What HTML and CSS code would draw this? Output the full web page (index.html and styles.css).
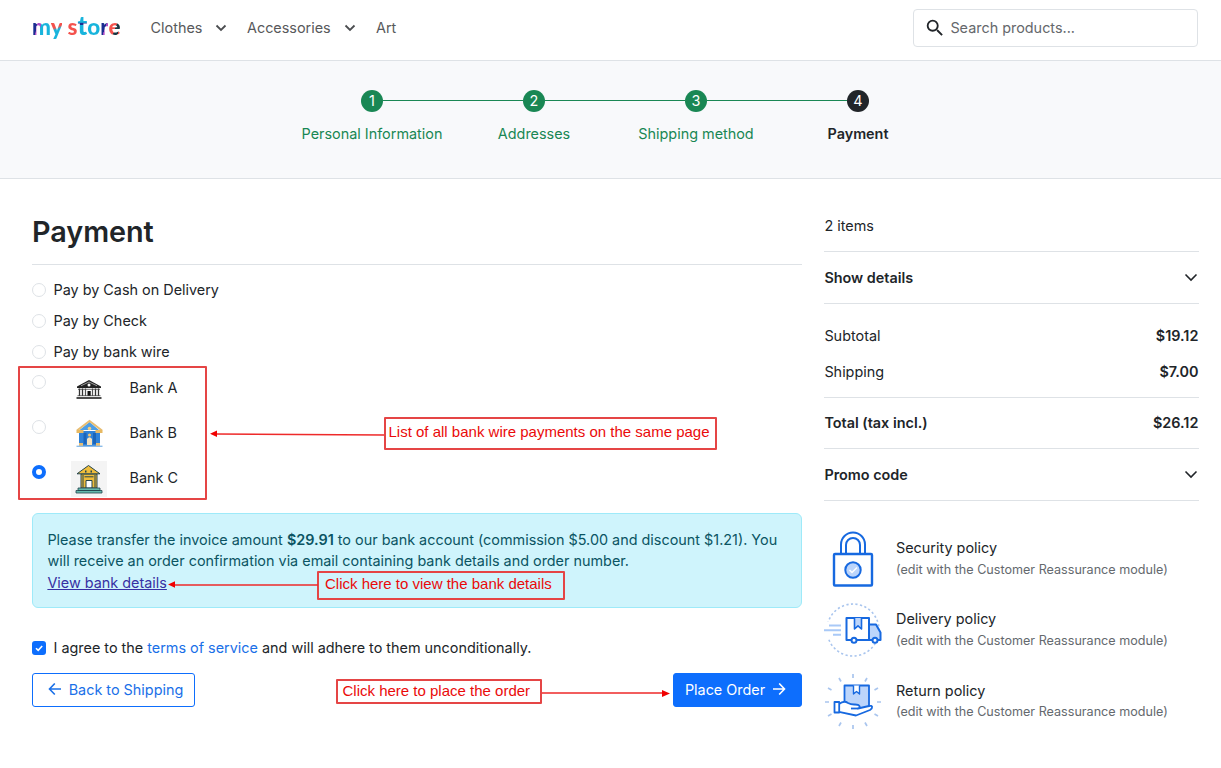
FILE: index.html
```html
<!DOCTYPE html>
<html lang="en">
<head>
    <meta charset="UTF-8">
    <meta name="viewport" content="width=device-width, initial-scale=1.0">
    <title>Checkout - Payment</title>
    <link rel="stylesheet" href="styles.css">
</head>
<body>
    <header class="header">
        <a class="logo" aria-label="my store"><span class="l-m">m</span><span class="l-y">y</span> <span class="l-s">s</span><span class="l-t">t</span><span class="l-o">o</span><span class="l-r">r</span><span class="l-e">e</span></a>
        <nav class="main-menu">
            <a class="menu-item clothes">Clothes
                <svg class="caret" viewBox="0 0 12 8"><path d="M1.5 1.5 6 6l4.500-4.500"/></svg>
            </a>
            <a class="menu-item accessories">Accessories
                <svg class="caret" viewBox="0 0 12 8"><path d="M1.5 1.500 6 6l4.500-4.500"/></svg>
            </a>
            <a class="menu-item">Art</a>
        </nav>
        <div class="search">
            <svg class="search-icon" viewBox="0 0 24 24"><path d="M15.500 14h-.79l-.28-.27A6.471 6.471 0 0 0 16 9.500 6.500 6.500 0 1 0 9.500 16c1.610 0 3.090-.59 4.230-1.570l.27.28v.79l5 4.990L20.490 19l-4.990-5zm-6 0C7.010 14 5 11.990 5 9.500S7.010 5 9.500 5 14 7.010 14 9.500 11.990 14 9.500 14z"/></svg>
            <span>Search products...</span>
        </div>
    </header>

    <section class="steps-bar">
        <ol class="steps">
            <li class="step"><span class="step-number">1</span><span class="step-label">Personal Information</span></li>
            <li class="step"><span class="step-number">2</span><span class="step-label">Addresses</span></li>
            <li class="step"><span class="step-number">3</span><span class="step-label">Shipping method</span></li>
            <li class="step current"><span class="step-number">4</span><span class="step-label">Payment</span></li>
        </ol>
    </section>

    <main class="checkout">
        <section class="payment">
            <h1>Payment</h1>

            <div class="options">
                <label class="option"><span class="radio"></span>Pay by Cash on Delivery</label>
                <label class="option"><span class="radio"></span>Pay by Check</label>
                <label class="option"><span class="radio"></span>Pay by bank wire</label>
            </div>

            <div class="banks">
                <label class="bank">
                    <span class="radio"></span>
                    <svg class="bank-logo" viewBox="0 0 36 36">
                        <path d="M6 15.500 18 9l12 6.500v1.500H6z" fill="#222"/>
                        <path d="M10 14.800 18 11l8 3.800" stroke="#bbb" stroke-width=".8" fill="none"/>
                        <circle cx="18" cy="14" r="1.500" fill="#fff"/>
                        <path d="M8.500 17.500V25M11.500 17.500V25M24.500 17.500V25M27.500 17.500V25" stroke="#333" stroke-width="1.300"/>
                        <path d="M14.500 17.500V25M21.500 17.500V25" stroke="#555" stroke-width="1.200"/>
                        <path d="M16.500 20h3.200v5h-3.200z" fill="#111"/>
                        <path d="M7 18.300h22M6.500 24.700h23" stroke="#444" stroke-width=".8"/>
                        <path d="M5.500 27h25" stroke="#111" stroke-width="1.500"/>
                    </svg>
                    <span class="bank-name">Bank A</span>
                </label>
                <label class="bank">
                    <span class="radio"></span>
                    <svg class="bank-logo" viewBox="0 0 36 36">
                        <path d="M8 15h21v15H8z" fill="#2f82d8"/>
                        <path d="M12.500 17h3v11h-3zM22 17h3v11h-3z" fill="#1d65b8"/>
                        <path d="M8.500 14 18.500 6 28 14z" fill="#4d9ee5"/>
                        <path d="M6 14.500 18.500 5 31 14.500" stroke="#e7bd72" stroke-width="2" fill="none"/>
                        <path d="M5.500 14h7v3h-7zM24.500 14h7v3h-7z" fill="#e7b962"/>
                        <circle cx="18.500" cy="12.500" r="1.800" fill="#f1cc80"/>
                        <path d="M16 23q2.500-3.500 5 0v6h-5z" fill="#f7e3bd"/>
                        <circle cx="18.500" cy="19" r="1.500" fill="#f3c46f"/>
                        <path d="M8 27h4v3H8zM25 27h4v3h-4z" fill="#e7bd72"/>
                        <path d="M5.500 30.300h26" stroke="#8bbce9" stroke-width="1.400"/>
                    </svg>
                    <span class="bank-name">Bank B</span>
                </label>
                <label class="bank">
                    <span class="radio checked"></span>
                    <svg class="bank-logo" viewBox="0 0 36 36">
                        <path d="M0 0h36v36H0z" fill="#f4f4f4"/>
                        <g stroke="#24454e" stroke-width="1" stroke-linejoin="round">
                            <path d="M10 13h16v14H10z" fill="#efbd3b"/>
                            <path d="M6 12.800 17.500 4.500 29 12.800z" fill="#efbd3b"/>
                            <path d="M12 14v12.500M24 14v12.500" fill="none"/>
                            <path d="M13.500 15.800h9" fill="none"/>
                            <path d="M15 19.500h6V27h-6z" fill="#fff"/>
                            <path d="M7 27h22v2.500H7zM5 29.500h26V32H5z" fill="#65b9ad" stroke-width=".8"/>
                        </g>
                        <path d="M14 9.500h1.500v2H14zM19.500 9.500H21v2h-1.500z" fill="#24454e"/>
                    </svg>
                    <span class="bank-name">Bank C</span>
                </label>
            </div>

            <div class="alert">
                Please transfer the invoice amount <strong>$29.91</strong> to our bank account (commission $5.00 and discount $1.21). You will receive an order confirmation via email containing bank details and order number.<br>
                <a class="details-link">View bank details</a>
            </div>

            <label class="terms">
                <span class="checkbox"><svg viewBox="0 0 14 14"><path d="m4 7.200 2.200 2.200L10.200 5"/></svg></span>
                <span>I agree to the <a>terms of service</a> and will adhere to them unconditionally.</span>
            </label>

            <div class="actions">
                <button class="btn btn-outline">
                    <svg class="arrow" viewBox="0 0 14 14"><path d="M13 6H1.500M6.800.5 1.500 6l5.300 5.500"/></svg>
                    Back to Shipping
                </button>
                <button class="btn btn-primary">
                    Place Order
                    <svg class="arrow" viewBox="0 0 14 14"><path d="M1 6h11.500M7.200.5 12.500 6l-5.300 5.500"/></svg>
                </button>
            </div>
        </section>

        <aside class="summary">
            <div class="items-count">2 items</div>
            <div class="toggle">Show details
                <svg class="chevron" viewBox="0 0 14 9"><path d="m1.500 1.500 5.500 5.500 5.500-5.500"/></svg>
            </div>
            <div class="subtotals">
                <div class="line"><span>Subtotal</span><strong>$19.12</strong></div>
                <div class="line"><span>Shipping</span><strong>$7.00</strong></div>
            </div>
            <div class="line total"><strong>Total (tax incl.)</strong><strong>$26.12</strong></div>
            <div class="toggle">Promo code
                <svg class="chevron" viewBox="0 0 14 9"><path d="m1.500 1.500 5.500 5.500 5.500-5.500"/></svg>
            </div>

            <ul class="reassurance">
                <li>
                    <svg class="policy-icon" viewBox="0 0 58 58">
                        <g fill="none" stroke="#1769e0" stroke-width="2">
                            <path d="M17 24V14.500a12 12 0 0 1 24 0V24"/>
                            <path d="M22 24V15a7 7 0 0 1 14 0v9"/>
                            <rect x="10" y="24" width="38" height="31.500" rx="1" fill="#fff" stroke-width="2.400"/>
                            <circle cx="29" cy="40" r="7.700" fill="#bcd5fb"/>
                        </g>
                        <path d="m25.500 40 2.500 2.500 5-5" fill="none" stroke="#fff" stroke-width="1.500"/>
                    </svg>
                    <div><p>Security policy</p><small>(edit with the Customer Reassurance module)</small></div>
                </li>
                <li>
                    <svg class="policy-icon" viewBox="0 0 58 58">
                        <circle cx="29" cy="29" r="26" fill="none" stroke="#a9c5ee" stroke-width="1.600" stroke-dasharray="2.200 2.400"/>
                        <path d="M0 21h17v16H0z" fill="#fff"/>
                        <path d="M5 24.500h12M0 29.200h17M9 33.700h8" stroke="#a9c9f7" stroke-width="2"/>
                        <g stroke="#1769e0" stroke-width="2" stroke-linejoin="round">
                            <path d="M22.500 17h22.500v22H22.500z" fill="#fff"/>
                            <path d="M45 23.500h7l4.500 8V39H45z" fill="#bcd5fb"/>
                            <path d="M30.500 17v11l3.500-3.200 3.500 3.200V17" fill="#bcd5fb" stroke-width="1.600"/>
                            <circle cx="30" cy="39.300" r="2.500" fill="#fff"/>
                            <circle cx="51" cy="39.300" r="2.500" fill="#fff"/>
                        </g>
                    </svg>
                    <div><p>Delivery policy</p><small>(edit with the Customer Reassurance module)</small></div>
                </li>
                <li>
                    <svg class="policy-icon" viewBox="0 0 58 58">
                        <path d="M29 1v4M29 52v4M1 29h4M53 29h4M15 5l2 3.500M43 5l-2 3.500M4 15l3.500 2M54 15l-3.500 2M4 43l3.500-2M54 43l-3.500-2M15 53l2-3.500M43 53l-2-3.500" stroke="#a9c5ee" stroke-width="1.700"/>
                        <g stroke="#1769e0" stroke-width="1.800" stroke-linejoin="round">
                            <path d="M20.500 12.500h24.500V37H20.500z" fill="#bcd5fb"/>
                            <path d="M29.500 12.500v8.500l3-2.500 3 2.500v-8.500" fill="#fff" stroke-width="1.400"/>
                            <path d="M15 31q5-4 9-1 3 1.700 7 1.500c5 0 6 3 3 4l11-2.500c4-1 4 2 1 4L32 42.500l-17-3.700z" fill="#fff"/>
                            <path d="M10.500 29h4.700v10.500h-4.700z" fill="#fff"/>
                            <path d="M34 35.500h-7" fill="none"/>
                        </g>
                    </svg>
                    <div><p>Return policy</p><small>(edit with the Customer Reassurance module)</small></div>
                </li>
            </ul>
        </aside>
    </main>

    <!-- Guide notes over the page -->
    <div class="frame"></div>
    <div class="note note-banks">List of all bank wire payments on the same page</div>
    <div class="note note-details">Click here to view the bank details</div>
    <div class="note note-order">Click here to place the order</div>
    <svg class="note-arrows" viewBox="0 0 1221 768">
        <path d="M384 435 216 434M318 585H174M542 693h121" stroke="#ee2a2a" stroke-width="1.700"/>
        <path d="m210 433.700 7-3.200v6.500zM168 584.500l7-3.200v6.500zM670 693.500l-8-3.500v7z" fill="#f00000"/>
    </svg>
</body>
</html>
```

FILE: styles.css
```css
* {
    box-sizing: border-box;
}

body {
    margin: 0;
    position: relative;
    height: 768px;
    overflow: hidden;
    font-family: Inter, "Liberation Sans", sans-serif;
    font-size: 14.4px;
    line-height: 21.6px;
    color: #212529;
    background-color: #fff;
}

h1, p, ol, ul {
    margin: 0;
    padding: 0;
    list-style: none;
}

strong {
    font-weight: 600;
}

/* Header */
.header {
    height: 61px;
    padding: 0 23px 5px 32px;
    display: flex;
    align-items: center;
    border-bottom: 1px solid #dee2e6;
}

.logo {
    width: 118.6px;
    padding-bottom: 3px;
    font-family: Lato, sans-serif;
    font-size: 22.5px;
    font-weight: 900;
    line-height: 32px;
    white-space: nowrap;
}

.logo span {
    color: transparent;
    background-clip: text;
    -webkit-background-clip: text;
}

.l-m { background-image: linear-gradient(100deg, #1b2d91 28%, #b04bc4 30% 45%, #18b4dc 47%); }
.l-y { background-image: linear-gradient(160deg, #f4524d 52%, #18b4dc 60%); }
.l-s { background-image: linear-gradient(#f4524d, #f4524d); }
.l-t { background-image: linear-gradient(#18b4dc 42%, #1b2d91 43% 50%, #18b4dc 51%); }
.l-o { background-image: linear-gradient(#18b4dc, #18b4dc); }
.l-r { background-image: linear-gradient(110deg, #1b2d91 58%, #b04bc4 60%); }
.l-e { background-image: linear-gradient(110deg, #f4524d 55%, #173642 57% 75%, #f4524d 76%); }

.logo .l-t {
    font-size: 26px;
}

.main-menu {
    display: flex;
    color: #58595b;
}

.menu-item {
    display: flex;
    align-items: center;
    white-space: nowrap;
}

.clothes,
.accessories {
    justify-content: space-between;
}

.clothes {
    width: 76.4px;
    margin-right: 20px;
}

.accessories {
    width: 109px;
    margin-right: 20px;
}

.caret {
    width: 12px;
    height: 8px;
    fill: none;
    stroke: #4b4d50;
    stroke-width: 1.8;
}

.search {
    width: 285px;
    height: 38px;
    margin-left: auto;
    padding-left: 10px;
    display: flex;
    align-items: center;
    gap: 4.4px;
    border: 1px solid #dee2e6;
    border-radius: 4px;
    color: #65686c;
}

.search-icon {
    width: 22px;
    height: 22px;
    fill: #212529;
}

/* Checkout steps */
.steps-bar {
    height: 118px;
    padding-top: 28.5px;
    background-color: #f8f9fb;
    border-bottom: 1px solid #dee2e6;
}

.steps {
    width: 648px;
    margin-left: 291px;
    display: flex;
}

.step {
    width: 162px;
    display: flex;
    flex-direction: column;
    align-items: center;
    gap: 11.3px;
    position: relative;
    color: #198754;
}

.step:not(:last-child)::after {
    content: "";
    position: absolute;
    top: 10.5px;
    left: 92px;
    width: 140px;
    height: 1px;
    background-color: #198754;
}

.step-number {
    width: 22px;
    height: 22px;
    border-radius: 50%;
    background-color: #198754;
    color: #fff;
    text-align: center;
}

.current .step-number {
    background-color: #212529;
}

.current .step-label {
    color: #212529;
    font-weight: 600;
}

/* Main columns */
.checkout {
    display: grid;
    grid-template-columns: 770px 375px;
    column-gap: 22px;
    padding-left: 32px;
}

.payment h1 {
    height: 86px;
    padding-top: 36px;
    font-size: 28.8px;
    font-weight: 600;
    line-height: 34px;
    letter-spacing: -0.05px;
    border-bottom: 1px solid #dee2e6;
}

.options {
    padding: 9px 0 1px;
}

.option {
    height: 31px;
    display: flex;
    align-items: center;
    gap: 7.5px;
}

.radio {
    flex: none;
    width: 14px;
    height: 14px;
    border: 1px solid #dee2e6;
    border-radius: 50%;
}

.radio.checked {
    border: 4px solid #0d6efd;
}

.bank {
    height: 45px;
    display: flex;
    align-items: flex-start;
}

.bank .radio {
    margin-top: 7px;
}

.bank-logo {
    width: 36px;
    height: 36px;
    margin: 3px 0 0 25px;
}

.bank-name {
    margin: 9px 0 0 22.5px;
}

.alert {
    height: 95px;
    margin-top: 10px;
    padding: 14.6px 14.4px;
    border: 1px solid #9eeaf9;
    border-radius: 6px;
    background-color: #cff4fc;
    color: #0b5563;
}

.details-link {
    color: #3730a3;
    text-decoration: underline;
}

.terms {
    margin-top: 29px;
    display: flex;
    align-items: center;
    gap: 7.5px;
}

.terms a {
    color: #1a70e8;
}

.checkbox {
    width: 14px;
    height: 14px;
    border-radius: 3px;
    background-color: #0d6efd;
}

.checkbox svg {
    display: block;
    fill: none;
    stroke: #fff;
    stroke-width: 1.6;
}

.actions {
    margin-top: 14px;
    display: flex;
    justify-content: space-between;
}

.btn {
    height: 34px;
    display: flex;
    align-items: center;
    justify-content: center;
    gap: 7px;
    padding: 0;
    border: 1px solid #0d6efd;
    border-radius: 3px;
    font: inherit;
}

.btn-outline {
    width: 163px;
    padding-left: 4px;
    background-color: #fff;
    color: #1a70e8;
}

.btn-primary {
    width: 129px;
    padding-right: 4px;
    background-color: #0d6efd;
    color: #fff;
}

.arrow {
    width: 14px;
    height: 14px;
    fill: none;
    stroke: currentColor;
    stroke-width: 1.6;
}

/* Order summary */
.items-count {
    height: 73px;
    padding: 36px 0 0 0.4px;
    border-bottom: 1px solid #dee2e6;
}

.toggle {
    height: 52px;
    padding: 0 1px 0 0.4px;
    display: flex;
    align-items: center;
    justify-content: space-between;
    font-weight: 600;
    border-bottom: 1px solid #dee2e6;
}

.chevron {
    width: 14px;
    height: 9px;
    fill: none;
    stroke: #212529;
    stroke-width: 1.6;
}

.subtotals {
    height: 94px;
    padding-top: 14px;
    border-bottom: 1px solid #dee2e6;
}

.line {
    height: 36px;
    padding: 0 0.6px 0 0.4px;
    display: flex;
    align-items: center;
    justify-content: space-between;
}

.total {
    height: 51px;
    border-bottom: 1px solid #dee2e6;
}

.reassurance {
    padding-top: 29px;
}

.reassurance li {
    height: 71.4px;
    display: flex;
    gap: 14px;
}

.policy-icon {
    width: 58px;
    height: 58px;
}

.reassurance p {
    padding-top: 7px;
}

.reassurance small {
    display: block;
    font-size: 12.6px;
    color: #64696e;
    white-space: nowrap;
}

/* Guide notes */
.frame,
.note {
    position: absolute;
    border: 2px solid #e54545;
    border-radius: 1px;
}

.note {
    padding-left: 2.5px;
    font-family: "Liberation Sans", Arial, sans-serif;
    font-size: 15px;
    color: #ea0a0a;
    background-color: #fff;
    white-space: nowrap;
}

.frame {
    left: 18px;
    top: 366px;
    width: 189px;
    height: 134px;
}

.note-banks {
    left: 384px;
    top: 417px;
    width: 333px;
    height: 33px;
    line-height: 26px;
}

.note-details {
    left: 317px;
    top: 571px;
    width: 248px;
    height: 29px;
    padding-left: 6px;
    line-height: 22px;
    background-color: transparent;
}

.note-order {
    left: 336px;
    top: 679px;
    width: 206px;
    height: 25px;
    padding-left: 4.5px;
    line-height: 20px;
}

.note-arrows {
    position: absolute;
    left: 0;
    top: 0;
    width: 1221px;
    height: 768px;
    pointer-events: none;
}
```
